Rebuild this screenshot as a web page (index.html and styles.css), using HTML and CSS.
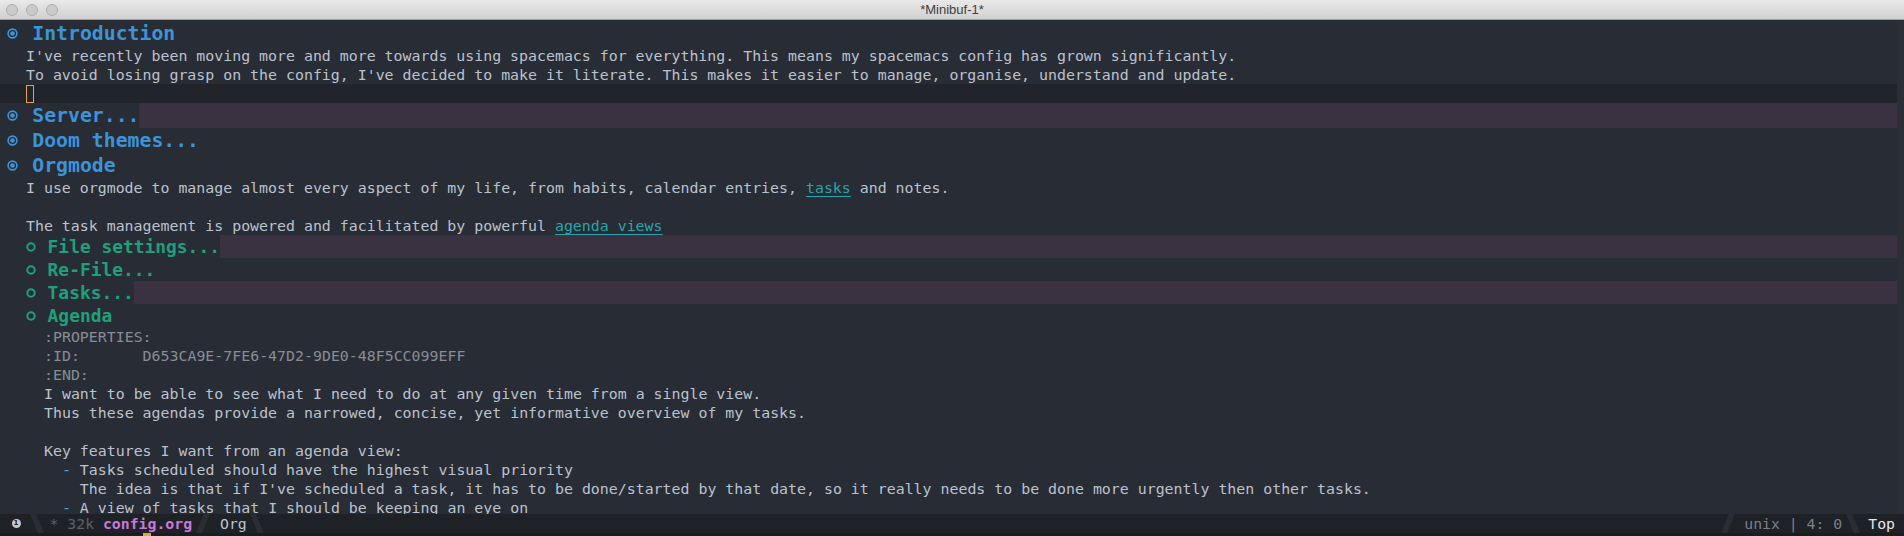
FILE: index.html
```html
<!DOCTYPE html>
<html>
<head>
<meta charset="utf-8">
<link rel="stylesheet" href="styles.css">
</head>
<body>
<div class="window">
  <div class="titlebar">
    <div class="lights"><span class="light"></span><span class="light"></span><span class="light"></span></div>
    <div class="title">*Minibuf-1*</div>
    <div></div>
  </div>
  <div class="editor">
    <div class="buffer">
      <div class="h1"><span class="b1"><svg width="11" height="11" viewBox="0 0 11 11"><circle cx="5.5" cy="5.5" r="4.4" fill="none" stroke="#3d93d9" stroke-width="1.6"/><circle cx="5.5" cy="5.5" r="2.3" fill="#3d93d9"/></svg></span><span>Introduction</span></div>
      <div class="line">I've recently been moving more and more towards using spacemacs for everything. This means my spacemacs config has grown significantly.</div>
      <div class="line">To avoid losing grasp on the config, I've decided to make it literate. This makes it easier to manage, organise, understand and update.</div>
      <div class="line cur"><span class="cursor"></span></div>
      <div class="h1"><span class="b1"><svg width="11" height="11" viewBox="0 0 11 11"><circle cx="5.5" cy="5.5" r="4.4" fill="none" stroke="#3d93d9" stroke-width="1.6"/><circle cx="5.5" cy="5.5" r="2.3" fill="#3d93d9"/></svg></span><span>Server...</span><span class="fold"></span></div>
      <div class="h1"><span class="b1"><svg width="11" height="11" viewBox="0 0 11 11"><circle cx="5.5" cy="5.5" r="4.4" fill="none" stroke="#3d93d9" stroke-width="1.6"/><circle cx="5.5" cy="5.5" r="2.3" fill="#3d93d9"/></svg></span><span>Doom themes...</span></div>
      <div class="h1"><span class="b1"><svg width="11" height="11" viewBox="0 0 11 11"><circle cx="5.5" cy="5.5" r="4.4" fill="none" stroke="#3d93d9" stroke-width="1.6"/><circle cx="5.5" cy="5.5" r="2.3" fill="#3d93d9"/></svg></span><span>Orgmode</span></div>
      <div class="line">I use orgmode to manage almost every aspect of my life, from habits, calendar entries, <span class="link">tasks</span> and notes.</div>
      <div class="line"></div>
      <div class="line">The task management is powered and facilitated by powerful <span class="link">agenda views</span></div>
      <div class="h2"><span class="b2"><svg width="10" height="10" viewBox="0 0 10 10"><circle cx="5" cy="5" r="3.7" fill="none" stroke="#1fa07a" stroke-width="2"/></svg></span><span>File settings...</span><span class="fold"></span></div>
      <div class="h2"><span class="b2"><svg width="10" height="10" viewBox="0 0 10 10"><circle cx="5" cy="5" r="3.7" fill="none" stroke="#1fa07a" stroke-width="2"/></svg></span><span>Re-File...</span></div>
      <div class="h2"><span class="b2"><svg width="10" height="10" viewBox="0 0 10 10"><circle cx="5" cy="5" r="3.7" fill="none" stroke="#1fa07a" stroke-width="2"/></svg></span><span>Tasks...</span><span class="fold"></span></div>
      <div class="h2"><span class="b2"><svg width="10" height="10" viewBox="0 0 10 10"><circle cx="5" cy="5" r="3.7" fill="none" stroke="#1fa07a" stroke-width="2"/></svg></span><span>Agenda</span></div>
      <div class="line l2 prop">:PROPERTIES:</div>
      <div class="line l2 prop">:ID:       D653CA9E-7FE6-47D2-9DE0-48F5CC099EFF</div>
      <div class="line l2 prop">:END:</div>
      <div class="line l2">I want to be able to see what I need to do at any given time from a single view.</div>
      <div class="line l2">Thus these agendas provide a narrowed, concise, yet informative overview of my tasks.</div>
      <div class="line l2"></div>
      <div class="line l2">Key features I want from an agenda view:</div>
      <div class="line l2">  <span class="dash">-</span> Tasks scheduled should have the highest visual priority</div>
      <div class="line l2">    The idea is that if I've scheduled a task, it has to be done/started by that date, so it really needs to be done more urgently then other tasks.</div>
      <div class="line l2">  <span class="dash">-</span> A view of tasks that I should be keeping an eye on</div>
    </div>
    <div class="fringe"></div>
  </div>
  <div class="modeline">
    <span class="winnum">1</span>
    <span class="sep sep-a"></span>
    <span class="ml-dim">* 32k </span><span class="ml-file">config.org</span>
    <span class="sep sep-b"></span>
    <span class="ml-mode">Org</span>
    <span class="sep sep-c"></span>
    <span class="ml-spacer"></span>
    <span class="sep sep-d"></span>
    <span class="ml-pos">unix | 4: 0</span>
    <span class="sep sep-e"></span>
    <span class="ml-top">Top</span>
  </div>
  <div class="echo"><span class="echo-cursor"></span></div>
</div>
</body>
</html>
```

FILE: styles.css
```css
html, body {
  margin: 0;
  padding: 0;
  background: #282c34;
}

body {
  width: 1904px;
  height: 536px;
  overflow: hidden;
}

.window {
  display: flex;
  flex-direction: column;
  height: 536px;
}

.titlebar {
  flex: none;
  height: 19px;
  border-bottom: 1px solid #9f9f9f;
  background: linear-gradient(#e9e9e9, #d1d1d1);
  display: grid;
  grid-template-columns: 1fr auto 1fr;
  align-items: center;
}

.lights {
  display: flex;
  gap: 8px;
  padding-left: 6px;
}

.light {
  width: 12px;
  height: 12px;
  border-radius: 50%;
  background: #cbcbcb;
  border: 0.5px solid #acacac;
  box-sizing: border-box;
}

.title {
  font-family: "Liberation Sans", Arial, sans-serif;
  font-size: 13px;
  color: #404040;
}

.editor {
  flex: 1;
  min-height: 0;
  display: flex;
  overflow: hidden;
}

.buffer {
  flex: 1;
  padding-top: 1px;
  font-family: "DejaVu Sans Mono", monospace;
}

.fringe {
  width: 7px;
  flex: none;
  background: #2b2e35;
}

.line {
  height: 19px;
  line-height: 20px;
  font-size: 14.9px;
  color: #bbc2cf;
  white-space: pre;
  padding-left: 26px;
}

.line.l2 {
  padding-left: 44px;
}

.line.prop {
  color: #878c95;
}

.line.cur {
  background: #21242b;
  display: flex;
  align-items: center;
}

.cursor {
  width: 6px;
  height: 16px;
  border: 1px solid #e3a53a;
  margin-top: 1px;
}

.link {
  color: #2aa3ad;
  text-decoration: underline;
  text-underline-offset: 3px;
  text-decoration-thickness: 1px;
}

.dash {
  color: #4fa6e6;
}

.h1 {
  height: 25px;
  display: flex;
  align-items: center;
  padding-left: 7px;
  font-size: 19.8px;
  font-weight: bold;
  color: #3d93d9;
  white-space: pre;
}

.b1 {
  width: 25.3px;
  flex: none;
  display: flex;
  align-items: center;
}

.h2 {
  height: 23px;
  display: flex;
  align-items: center;
  padding-left: 26px;
  font-size: 17.9px;
  font-weight: bold;
  color: #1fa07a;
  white-space: pre;
}

.b2 {
  width: 21.6px;
  flex: none;
  display: flex;
  align-items: center;
}

.fold {
  flex: 1;
  align-self: stretch;
  background: #3a3241;
}

.modeline {
  flex: none;
  height: 19px;
  background: #1e2126;
  display: flex;
  align-items: center;
  font-family: "DejaVu Sans Mono", monospace;
  font-size: 14.8px;
  color: #bbc2cf;
  white-space: pre;
}

.winnum {
  margin-left: 11.5px;
  width: 9px;
  height: 9px;
  border-radius: 50%;
  background: #c4c8cf;
  color: #1e2126;
  font-family: "DejaVu Sans", sans-serif;
  font-size: 7px;
  font-weight: bold;
  line-height: 9px;
  text-align: center;
}

.sep {
  width: 6px;
  height: 19px;
  background: #2a2d34;
}

.sep-a {
  margin-left: 13px;
  transform: skewX(22deg);
}

.ml-dim {
  margin-left: 10px;
  color: #5b6268;
}

.ml-file {
  color: #c678dd;
  font-weight: bold;
}

.sep-b {
  margin-left: 8px;
  transform: skewX(-22deg);
}

.ml-mode {
  margin-left: 14px;
}

.sep-c {
  margin-left: 7px;
  transform: skewX(22deg);
}

.ml-spacer {
  flex: 1;
}

.sep-d {
  transform: skewX(-22deg);
}

.ml-pos {
  margin-left: 13px;
  color: #7a8089;
}

.sep-e {
  margin-left: 8px;
  transform: skewX(22deg);
}

.ml-top {
  margin-left: 12px;
  margin-right: 9px;
  color: #e4e6ea;
}

.echo {
  flex: none;
  height: 3px;
  background: #1a1c20;
  display: flex;
}

.echo-cursor {
  margin-left: 143px;
  width: 8px;
  height: 3px;
  background: #e3a53a;
}
```
